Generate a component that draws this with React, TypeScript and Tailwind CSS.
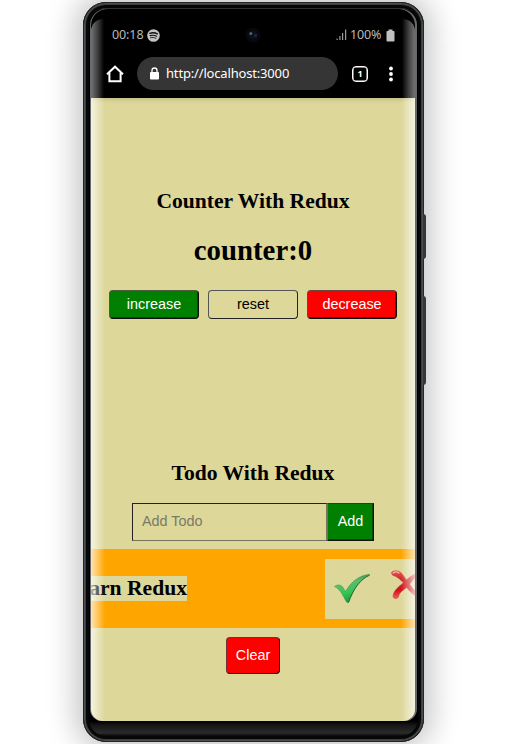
import React from "react";

const serif = "font-['Liberation_Serif','Times_New_Roman',serif]";
const sans = "font-['Liberation_Sans',Arial,sans-serif]";
const ui = "font-['Noto_Sans','Open_Sans',sans-serif]";

function StatusBar() {
  return (
    <div className="flex h-[30px] items-center pl-[21px] pr-[20px] text-[12.5px] text-[#b8b8b8]">
      <span className="w-[32px] whitespace-nowrap tracking-[-0.1px]">00:18</span>
      <svg className="ml-[3px]" width="13" height="13" viewBox="0 0 13 13">
        <circle cx="6.5" cy="6.5" r="6.3" fill="#c4c4c4" />
        <g fill="none" stroke="#111" strokeLinecap="round">
          <path d="M2.7 4.3C5.4 3.4 8.300 3.700 10.400 4.900" strokeWidth="1.3" />
          <path d="M3.100 6.600C5.400 5.900 7.800 6.200 9.700 7.200" strokeWidth="1.100" />
          <path d="M3.500 8.700C5.400 8.200 7.200 8.400 8.900 9.300" strokeWidth="0.900" />
        </g>
      </svg>
      <svg className="ml-[84px]" width="18" height="18" viewBox="0 0 18 18">
        <circle cx="9" cy="9" r="7.500" fill="#07080a" />
        <circle cx="9" cy="9" r="4.500" fill="#0c1018" />
        <circle cx="6.800" cy="7.600" r="1.500" fill="#56606f" />
        <circle cx="11.500" cy="9.600" r="1.400" fill="#182d55" />
      </svg>
      <div className="ml-auto flex items-center">
        <svg width="11" height="12" viewBox="0 0 11 12" fill="#999">
          <rect x="0.500" y="9.500" width="1.200" height="1.500" />
          <rect x="3.300" y="7" width="1.200" height="4" />
          <rect x="6" y="4" width="1.200" height="7" />
          <rect x="9" y="0.500" width="1.200" height="10.500" />
        </svg>
        <span className="ml-[3px] w-[33px] whitespace-nowrap tracking-[-0.15px]">100%</span>
        <svg className="ml-[3px]" width="9" height="13" viewBox="0 0 9 13" fill="#c0c0c0">
          <path d="M2.500 0.500h4v1.500h1.200a.8 .8 0 0 1 .8 .8v9a.8 .8 0 0 1-.8 .8H1.300a.8 .8 0 0 1-.8-.8v-9a.8 .8 0 0 1 .8-.8h1.200z" />
        </svg>
      </div>
    </div>
  );
}

function BrowserBar() {
  return (
    <div className="flex h-[48px] items-center pb-[1px] text-white">
      <svg className="ml-[15px]" width="18" height="18" viewBox="0 0 18 18" fill="none" stroke="white" strokeWidth="2">
        <path d="M1 9.300L9 1.700L17 9.300M3.400 7.800V16.200H14.600V7.800" />
      </svg>
      <div className="ml-[13px] flex h-[33px] w-[201px] items-center rounded-full bg-[#353535] pl-[13px]">
        <svg width="9" height="13" viewBox="0 0 9 13">
          <path d="M2 6V3.500a2.500 2.500 0 0 1 5 0V6" fill="none" stroke="white" strokeWidth="1.300" />
          <rect y="5" width="9" height="7.500" rx="1" fill="white" />
        </svg>
        <span className="ml-[7px] whitespace-nowrap text-[13px] tracking-[-0.17px]">http://localhost:3000</span>
      </div>
      <div className="ml-[14px] flex h-4 w-4 items-center justify-center rounded-[4px] border-[1.5px] border-white text-[9px] font-bold shadow-[inset_0_0_0_0.5px_white]">1</div>
      <svg className="ml-[21px]" width="4" height="16" viewBox="0 0 4 16" fill="white">
        <circle cx="2" cy="2.500" r="1.900" />
        <circle cx="2" cy="8" r="1.900" />
        <circle cx="2" cy="13.500" r="1.900" />
      </svg>
    </div>
  );
}

function Counter() {
  return (
    <section className="flex h-[350px] flex-col items-center pt-[88px]">
      <h2 className="h-[30px] whitespace-nowrap text-[21.6px] leading-[30px] font-bold">Counter With Redux</h2>
      <h1 className="mt-[16px] h-[36px] whitespace-nowrap text-[28.8px] leading-[36px] font-bold">counter:0</h1>
      <div className={`mt-[22px] flex gap-[9px] text-[14.4px] ${sans}`}>
        <button className="h-[29px] w-[90px] rounded-[4px] border-[1.5px] border-[#111] border-t-[#4b5d3d] border-l-[#4b5d3d] bg-[#008000] text-white shadow-[inset_-0.5px_-0.5px_0_#111]">increase</button>
        <button className="h-[29px] w-[90px] rounded-[4px] border-[1.5px] border-[#222] border-t-[#555] border-l-[#555]">reset</button>
        <button className="h-[29px] w-[90px] rounded-[4px] border-[1.5px] border-[#111] border-t-[#704343] border-l-[#704343] bg-[#ff0000] text-white shadow-[inset_-0.5px_-0.5px_0_#111]">decrease</button>
      </div>
    </section>
  );
}

function CheckMark() {
  return (
    <svg className="shrink-0" width="36" height="32" viewBox="0 0 36 32">
      <defs>
        <linearGradient id="check" x1="0" y1="0" x2="0.3" y2="1">
          <stop offset="0" stopColor="#176a2b" />
          <stop offset="0.400" stopColor="#58bd6d" />
          <stop offset="0.700" stopColor="#36c455" />
          <stop offset="1" stopColor="#1f9a3c" />
        </linearGradient>
      </defs>
      <path d="M.5 13.500C3 11 7.500 11.500 9 14.500L11.500 18.500C17 8.500 25 2.500 35.500 1.200V2.200C26.500 6 19.500 15.500 14.500 29.500H12.900C9.500 24.500 7 16.500 .5 13.500Z" fill="url(#check)" stroke="#2d8a45" strokeWidth=".4" />
      <path d="M14.500 29.500C19.500 15.500 26.500 6 35.500 2.200" fill="none" stroke="#1d5c2d" strokeWidth=".8" />
    </svg>
  );
}

function CrossMark() {
  return (
    <svg className="shrink-0" width="32" height="32" viewBox="0 0 32 32">
      <defs>
        <linearGradient id="cross" x1="0" y1="0" x2="0" y2="1">
          <stop offset="0" stopColor="#ee5858" />
          <stop offset="0.300" stopColor="#d3242a" />
          <stop offset="0.700" stopColor="#d2101a" />
          <stop offset="1" stopColor="#ef6060" />
        </linearGradient>
      </defs>
      <path d="M.3 3C1 .5 6 0 8.500 1.500C11.500 3.500 13.500 7 15.500 10C18.500 6.500 23 3.500 29 2.500C26 5.500 22 9.500 18.800 14C21 18 25 22 30 25.500C28 28 24 26.500 20 22.500C18.300 20.800 17 19.500 15.800 17.500C11.500 20.500 8.200 23 7.700 26C7.200 29.500 2 29.500 2 26C2.500 20.500 8 16.500 12.300 12.800C9.500 9.500 6 6.500 1.500 5.200Z" fill="url(#cross)" stroke="#c23434" strokeWidth=".4" />
      <path d="M2.200 3C4 1.600 6.500 1.800 8 3" fill="none" stroke="#ffb0b0" strokeWidth="1.200" strokeLinecap="round" />
    </svg>
  );
}

function Todo() {
  return (
    <section className="flex flex-col items-center pt-[10px]">
      <h2 className="h-[30px] whitespace-nowrap text-[21.6px] leading-[30px] font-bold">Todo With Redux</h2>
      <form className={`mt-[15px] flex h-[38px] w-[242px] text-[14.4px] ${sans}`} onSubmit={(e) => e.preventDefault()}>
        <input
          aria-label="Add Todo"
          placeholder="Add Todo"
          className="w-[195px] border-[1.5px] border-[#77735f] border-t-[#222] border-l-[#222] pl-[9px] text-[14.4px] placeholder:text-[#7b7967]"
        />
        <button className="w-[47px] border-[1.5px] border-[#111] border-t-[#333826] border-l-[#6c7760] bg-[#008000] text-white shadow-[inset_-0.5px_-0.5px_0_#111]">Add</button>
      </form>
      <div className="mt-2 flex h-[79px] w-full items-center justify-between overflow-hidden bg-[#ffa500]">
        <h3 className="flex h-[25px] w-[96px] items-center justify-end bg-[#ddd79a] text-[21.6px] font-bold whitespace-nowrap">Learn Redux</h3>
        <div className="flex h-[60px] w-[90px] shrink-0 items-center overflow-hidden bg-[#ddd79a] pl-[9px]">
          <CheckMark />
          <div className="-mt-[5px] ml-[21px]"><CrossMark /></div>
        </div>
      </div>
      <button className={`mt-[9px] h-[37px] w-[54px] rounded-[4px] border-[1.5px] border-[#111] border-t-[#753232] border-l-[#753232] bg-[#ff0000] text-[14.4px] text-white ${sans}`}>Clear</button>
    </section>
  );
}

export default function App() {
  return (
    <main className="flex h-[744px] w-[506px] overflow-hidden bg-white pl-[83px] pt-[2px]">
      <div className="relative h-[740px] w-[341px] rounded-[23px] bg-[#050505] shadow-[0_0_30px_7px_rgba(0,0,0,0.24)]">
        <div className="absolute top-[212px] -right-[2px] h-[45px] w-[3px] rounded-r-sm bg-[#37373a]" />
        <div className="absolute top-[294px] -right-[2px] h-[89px] w-[3px] rounded-r-sm bg-[#37373a]" />
        <div className="h-full rounded-[23px] border border-[#262626] bg-[linear-gradient(180deg,#858585_0px,#555_4px,#101010_7px,#000_12px,#000_718px,#151515_722px,#2b2b2b_730px,#080808_733px,#111_735px,#303030_739px)] p-[7px] pt-[6px] shadow-[inset_0_0_0_1px_#4b4d4e,inset_0_0_0_2px_#3c3e3f,inset_0_0_0_5px_#050708]">
          <div className={`relative flex h-[712px] w-[324px] flex-col overflow-hidden rounded-t-[16px] rounded-b-[12px] bg-[#ddd79a] text-black shadow-[-1px_0_0_#68696b,2px_0_0_#68696b] ${serif}`}>
            <header className={`h-[89px] shrink-0 bg-black pt-[11px] ${ui}`}>
              <StatusBar />
              <BrowserBar />
            </header>
            <div className="w-[324px] shadow-[inset_0_5px_5px_-4px_#bcb684]">
              <Counter />
              <Todo />
            </div>
            <div className="absolute top-[10px] left-0 h-[79px] w-[13px] rounded-tl-[12px] bg-linear-to-r from-white/45 via-white/25 to-white/0" />
            <div className="absolute top-[10px] right-0 h-[79px] w-[13px] rounded-tr-[12px] bg-linear-to-l from-white/45 via-white/25 to-white/0" />
            <div className="absolute top-[89px] bottom-0 left-0 w-[14px] bg-linear-to-r from-white/70 via-white/35 to-white/0" />
            <div className="absolute top-[89px] right-0 bottom-0 w-[14px] bg-linear-to-l from-white/70 via-white/35 to-white/0" />
          </div>
        </div>
      </div>
    </main>
  );
}
